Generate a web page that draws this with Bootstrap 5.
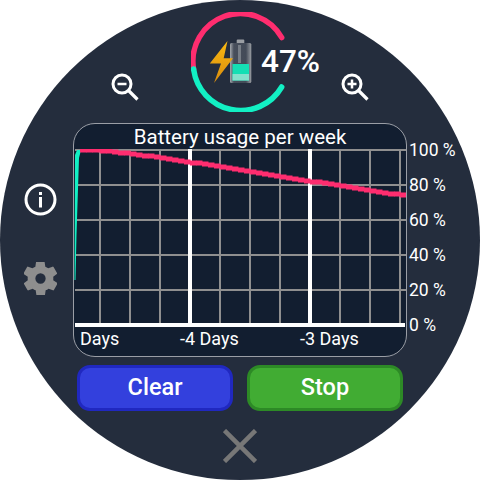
<!DOCTYPE html>
<html lang="en">

<head>
    <meta charset="UTF-8">
    <meta name="viewport" content="width=device-width, initial-scale=1.0">
    <title>Battery usage</title>
    <link href="https://cdn.jsdelivr.net/npm/bootstrap@5.3.0/dist/css/bootstrap.min.css" rel="stylesheet">
    <style>
        body {
            width: 480px;
            height: 480px;
            background: #fff;
            font-family: Roboto, "Liberation Sans", sans-serif;
            overflow: hidden;
        }

        .face {
            width: 480px;
            height: 480px;
            background: #242d3d;
            padding-top: 12px;
        }

        .top-row {
            height: 100px;
        }

        .zoom-icon {
            width: 30px;
            height: 30px;
            margin-bottom: 9px;
        }

        .ring-box {
            width: 100px;
            height: 100px;
            margin: 0 49px 0 51px;
        }

        .ring-svg {
            position: absolute;
            inset: 0;
        }

        .percent {
            position: absolute;
            left: 70px;
            top: 30px;
            font-size: 31.5px;
            font-weight: 500;
            line-height: 40px;
            color: #fff;
        }

        .chart-row {
            margin-top: 11px;
        }

        .side-col {
            width: 73px;
            padding: 60px 0 0 7px;
            gap: 46px;
        }

        .chart-box {
            width: 334px;
            height: 234px;
            background: #121e30;
            border: 1px solid #9a9ea6;
            border-radius: 22px;
            overflow: hidden;
            color: #fff;
        }

        .chart-title {
            height: 25px;
            font-size: 20.5px;
            line-height: 26px;
        }

        .days-row {
            font-size: 18px;
            line-height: 20px;
        }

        .days-row span {
            flex: none;
            width: 120px;
        }

        .days-row span:first-child {
            width: 106px;
            padding-left: 6px;
        }

        .axis-col {
            padding: 10px 0 0 2px;
            color: #fff;
            font-size: 17.5px;
            line-height: 35px;
            white-space: nowrap;
        }

        .btn-row {
            gap: 14px;
            margin-top: 8px;
        }

        .watch-btn {
            width: 156px;
            height: 46px;
            padding: 0;
            color: #fff;
            font-size: 23.5px;
            font-weight: 500;
            border-width: 3px;
            border-radius: 13px;
        }

        .btn-clear {
            background: #3340dd;
            border-color: #2028c0;
        }

        .btn-stop {
            background: #41ac33;
            border-color: #2d8a26;
        }

        .close-icon {
            width: 34px;
            height: 34px;
            margin-top: 18px;
        }
    </style>
</head>

<body class="m-0">
    <div class="face rounded-circle d-flex flex-column align-items-center">
        <div class="top-row d-flex align-items-end">
            <svg class="zoom-icon" viewBox="0 0 30 30" fill="none" stroke="#fff">
                <circle cx="12" cy="11" r="9" stroke-width="3" />
                <path d="M7.5 11h9" stroke-width="2.5" />
                <path d="M18.5 17.5l9 9" stroke-width="3.2" />
            </svg>
            <div class="ring-box position-relative">
                <svg class="ring-svg" width="100" height="100" viewBox="0 0 100 100">
                    <defs>
                        <linearGradient id="glass" x1="0" x2="1" y1="0" y2="0">
                            <stop offset="0" stop-color="#a4a8ac" />
                            <stop offset="0.18" stop-color="#474e5b" />
                            <stop offset="0.75" stop-color="#434b58" />
                            <stop offset="1" stop-color="#9a9ea3" />
                        </linearGradient>
                        <linearGradient id="bolt" x1="0" x2="0" y1="0" y2="1">
                            <stop offset="0" stop-color="#f9b912" />
                            <stop offset="1" stop-color="#d98c0d" />
                        </linearGradient>
                    </defs>
                    <path d="M90.7 25.5A47.5 47.5 0 0 0 2.6 57" fill="none" stroke="#ff2d6f" stroke-width="5.5" stroke-linecap="round" />
                    <path d="M2.6 57A47.5 47.5 0 0 0 90.7 75" fill="none" stroke="#12f0c4" stroke-width="5.5" stroke-linecap="round" />
                    <rect x="45.7" y="27.5" width="7.6" height="4.5" rx="1" fill="#9a9ea3" />
                    <rect x="39" y="31" width="21.3" height="40" rx="1.5" fill="url(#glass)" />
                    <rect x="41.5" y="52" width="16.5" height="16.5" fill="#14dfb4" />
                    <rect x="41.5" y="62" width="16.5" height="6.5" fill="#84e2cd" />
                    <rect x="47" y="33" width="3" height="18" fill="#a8adb2" opacity=".5" />
                    <path d="M36.5 29L18.8 51.5H30L23 71L42 46.3H32.7Z" fill="url(#bolt)" />
                </svg>
                <span class="percent">47%</span>
            </div>
            <svg class="zoom-icon" viewBox="0 0 30 30" fill="none" stroke="#fff">
                <circle cx="12" cy="11" r="9" stroke-width="3" />
                <path d="M7.5 11h9M12 6.5v9" stroke-width="2.5" />
                <path d="M18.5 17.5l9 9" stroke-width="3.2" />
            </svg>
        </div>

        <div class="chart-row d-flex align-self-start">
            <div class="side-col d-flex flex-column align-items-center">
                <svg width="33" height="33" viewBox="0 0 33 33">
                    <circle cx="16.5" cy="16.5" r="14.5" fill="none" stroke="#fff" stroke-width="3" />
                    <rect x="15" y="14" width="3" height="10.5" fill="#fff" />
                    <rect x="15" y="9" width="3" height="3" fill="#fff" />
                </svg>
                <svg width="33" height="33" viewBox="2.4 2.4 19.2 19.2">
                    <path fill="#8e8e8e" fill-rule="evenodd" d="M19.4 13a7.8 7.8 0 0 0 0-2l2.1-1.6a.5.5 0 0 0 .1-.6l-2-3.5a.5.5 0 0 0-.6-.2l-2.5 1a7.3 7.3 0 0 0-1.7-1l-.4-2.7a.5.5 0 0 0-.5-.4h-4a.5.5 0 0 0-.5.4l-.4 2.7a7.3 7.3 0 0 0-1.7 1l-2.5-1a.5.5 0 0 0-.6.2l-2 3.5a.5.5 0 0 0 .1.6L4.6 11a7.8 7.8 0 0 0 0 2l-2.1 1.6a.5.5 0 0 0-.1.6l2 3.5a.5.5 0 0 0 .6.2l2.5-1a7.3 7.3 0 0 0 1.7 1l.4 2.7a.5.5 0 0 0 .5.4h4a.5.5 0 0 0 .5-.4l.4-2.7a7.3 7.3 0 0 0 1.7-1l2.5 1a.5.5 0 0 0 .6-.2l2-3.5a.5.5 0 0 0-.1-.6ZM12 15a3 3 0 1 1 0-6 3 3 0 0 1 0 6Z" />
                </svg>
            </div>
            <div class="chart-box d-flex flex-column">
                <div class="chart-title text-center">Battery usage per week</div>
                <svg id="plot" class="d-block flex-shrink-0" width="332" height="180" viewBox="74 149 332 180"></svg>
                <div class="days-row d-flex">
                    <span>Days</span>
                    <span>-4 Days</span>
                    <span>-3 Days</span>
                </div>
            </div>
            <div class="axis-col">
                <div>100 %</div>
                <div>80 %</div>
                <div>60 %</div>
                <div>40 %</div>
                <div>20 %</div>
                <div>0 %</div>
            </div>
        </div>

        <div class="btn-row d-flex">
            <button type="button" class="btn watch-btn btn-clear">Clear</button>
            <button type="button" class="btn watch-btn btn-stop">Stop</button>
        </div>

        <svg class="close-icon" viewBox="0 0 34 34" stroke="#777" stroke-width="4.5">
            <path d="M1.5 1.5l31 31M32.5 1.5l-31 31" />
        </svg>
    </div>

    <script>
        // grid, then the two battery curves
        const plot = document.getElementById("plot");
        let html = "";
        for (let y = 150; y < 325; y += 35) {
            html += `<line x1="75" x2="406" y1="${y}" y2="${y}" stroke="#8f8f8f" stroke-width="2" />`;
        }
        for (let x = 100; x <= 400; x += 30) {
            const major = x === 190 || x === 310;
            html += `<line x1="${x}" x2="${x}" y1="149" y2="325" stroke="${major ? "#fff" : "#8f8f8f"}" stroke-width="${major ? 4 : 2}" />`;
        }
        html += `<line x1="75" x2="405" y1="325" y2="325" stroke="#fff" stroke-width="4" />`;
        html += `<path d="M74.5 280L75 155L77 150L81 150L79 158L76.5 235L75.5 280Z" fill="#12f0c4" />`;

        // pink line steps down in small stairs, with a little wobble in thickness
        const knots = [[80, 149.5], [100, 150.5], [130, 154], [160, 158], [190, 162.5], [220, 167], [250, 172], [280, 176.5], [310, 181.5], [340, 186], [370, 191], [405, 196]];
        for (let i = 0; i < knots.length - 1; i++) {
            const [x0, y0] = knots[i], [x1, y1] = knots[i + 1];
            for (let x = x0; x < x1; x += 6) {
                const y = Math.round(y0 + (y1 - y0) * (x - x0) / (x1 - x0));
                const h = 5 + (x % 18 === 0 ? 1 : 0);
                html += `<rect x="${x}" y="${y - h / 2}" width="6.5" height="${h}" fill="#ff2d6f" />`;
            }
        }
        plot.innerHTML = html;
    </script>

    <script src="https://cdn.jsdelivr.net/npm/bootstrap@5.3.0/dist/js/bootstrap.bundle.min.js"></script>
</body>

</html>
